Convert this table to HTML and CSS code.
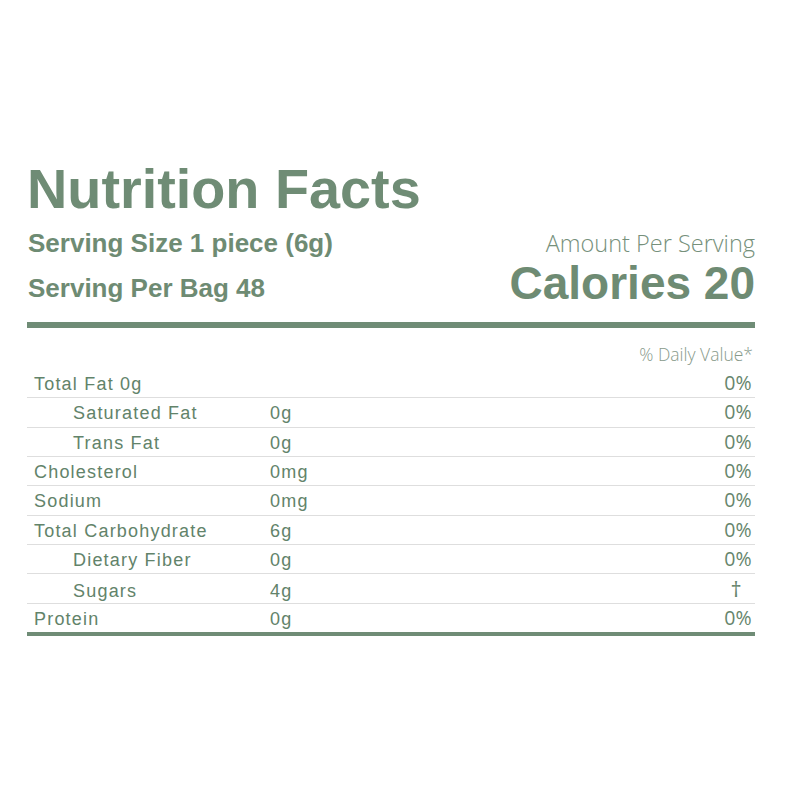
FILE: index.html
```html
<!DOCTYPE html>
<html>
<head>
<meta charset="utf-8">
<link rel="stylesheet" href="styles.css">
</head>
<body>
<div class="label">
  <h1 class="title">Nutrition Facts</h1>
  <div class="header">
    <div class="serving">
      <div class="serving-line">Serving Size 1 piece (6g)</div>
      <div class="serving-line">Serving Per Bag 48</div>
    </div>
    <div class="calories-block">
      <div class="amount">Amount Per Serving</div>
      <div class="calories">Calories 20</div>
    </div>
  </div>
  <div class="thick-bar"></div>
  <div class="dv-head">% Daily Value*</div>
  <div class="rows">
    <div class="row"><span class="name">Total Fat 0g</span><span class="qty"></span><span class="pct">0%</span></div>
    <div class="row"><span class="name sub">Saturated Fat</span><span class="qty">0g</span><span class="pct">0%</span></div>
    <div class="row"><span class="name sub">Trans Fat</span><span class="qty">0g</span><span class="pct">0%</span></div>
    <div class="row"><span class="name">Cholesterol</span><span class="qty">0mg</span><span class="pct">0%</span></div>
    <div class="row"><span class="name">Sodium</span><span class="qty">0mg</span><span class="pct">0%</span></div>
    <div class="row"><span class="name">Total Carbohydrate</span><span class="qty">6g</span><span class="pct">0%</span></div>
    <div class="row"><span class="name sub">Dietary Fiber</span><span class="qty">0g</span><span class="pct">0%</span></div>
    <div class="row"><span class="name sub">Sugars</span><span class="qty">4g</span><span class="pct dagger">†</span></div>
    <div class="row last"><span class="name">Protein</span><span class="qty">0g</span><span class="pct">0%</span></div>
  </div>
</div>
</body>
</html>
```

FILE: styles.css
```css
html, body {
  margin: 0;
  padding: 0;
  background: #ffffff;
}

body {
  width: 800px;
  height: 800px;
  color: #6e8b73;
  font-family: "Liberation Sans", Arial, sans-serif;
}

.label {
  width: 728px;
  padding: 161px 0 0 27px;
}

.title {
  margin: 0;
  font-size: 55.8px;
  line-height: 55px;
  font-weight: bold;
  color: #6f8c75;
}

.header {
  display: flex;
  justify-content: space-between;
  margin-top: 4.5px;
}

.serving-line {
  font-size: 26px;
  line-height: 45px;
  font-weight: bold;
  padding-left: 1px;
}

.calories-block {
  display: flex;
  flex-direction: column;
  align-items: flex-end;
  padding-top: 6px;
}

.amount {
  font-family: "Open Sans", sans-serif;
  font-weight: 300;
  font-size: 23.5px;
  line-height: 32px;
  color: #76907b;
}

.calories {
  margin-top: 1px;
  font-size: 46px;
  line-height: 46px;
  font-weight: bold;
}

.thick-bar {
  height: 6px;
  background: #6f8c76;
  margin-top: 11.5px;
}

.dv-head {
  font-family: "Open Sans", sans-serif;
  font-weight: 300;
  font-size: 17.5px;
  line-height: 20px;
  padding-top: 16px;
  height: 25px;
  text-align: right;
  padding-right: 2px;
  color: #889a8b;
}

.rows {
  border-bottom: 4px solid #6f8c76;
}

.row {
  display: grid;
  grid-template-columns: 236px 1fr auto;
  align-items: baseline;
  height: 28.33px;
  line-height: 28.33px;
  padding: 0 3px 0 7px;
  border-bottom: 1px solid #dedede;
  font-size: 18px;
  letter-spacing: 1.2px;
  color: #62836a;
}

.row.last {
  border-bottom: none;
}

.name.sub {
  padding-left: 39px;
}

.pct {
  font-family: "Open Sans", sans-serif;
  font-size: 19.5px;
  letter-spacing: 0.3px;
  text-align: right;
  color: #66856c;
}

.pct.dagger {
  font-size: 22px;
  padding-right: 10px;
}
```
